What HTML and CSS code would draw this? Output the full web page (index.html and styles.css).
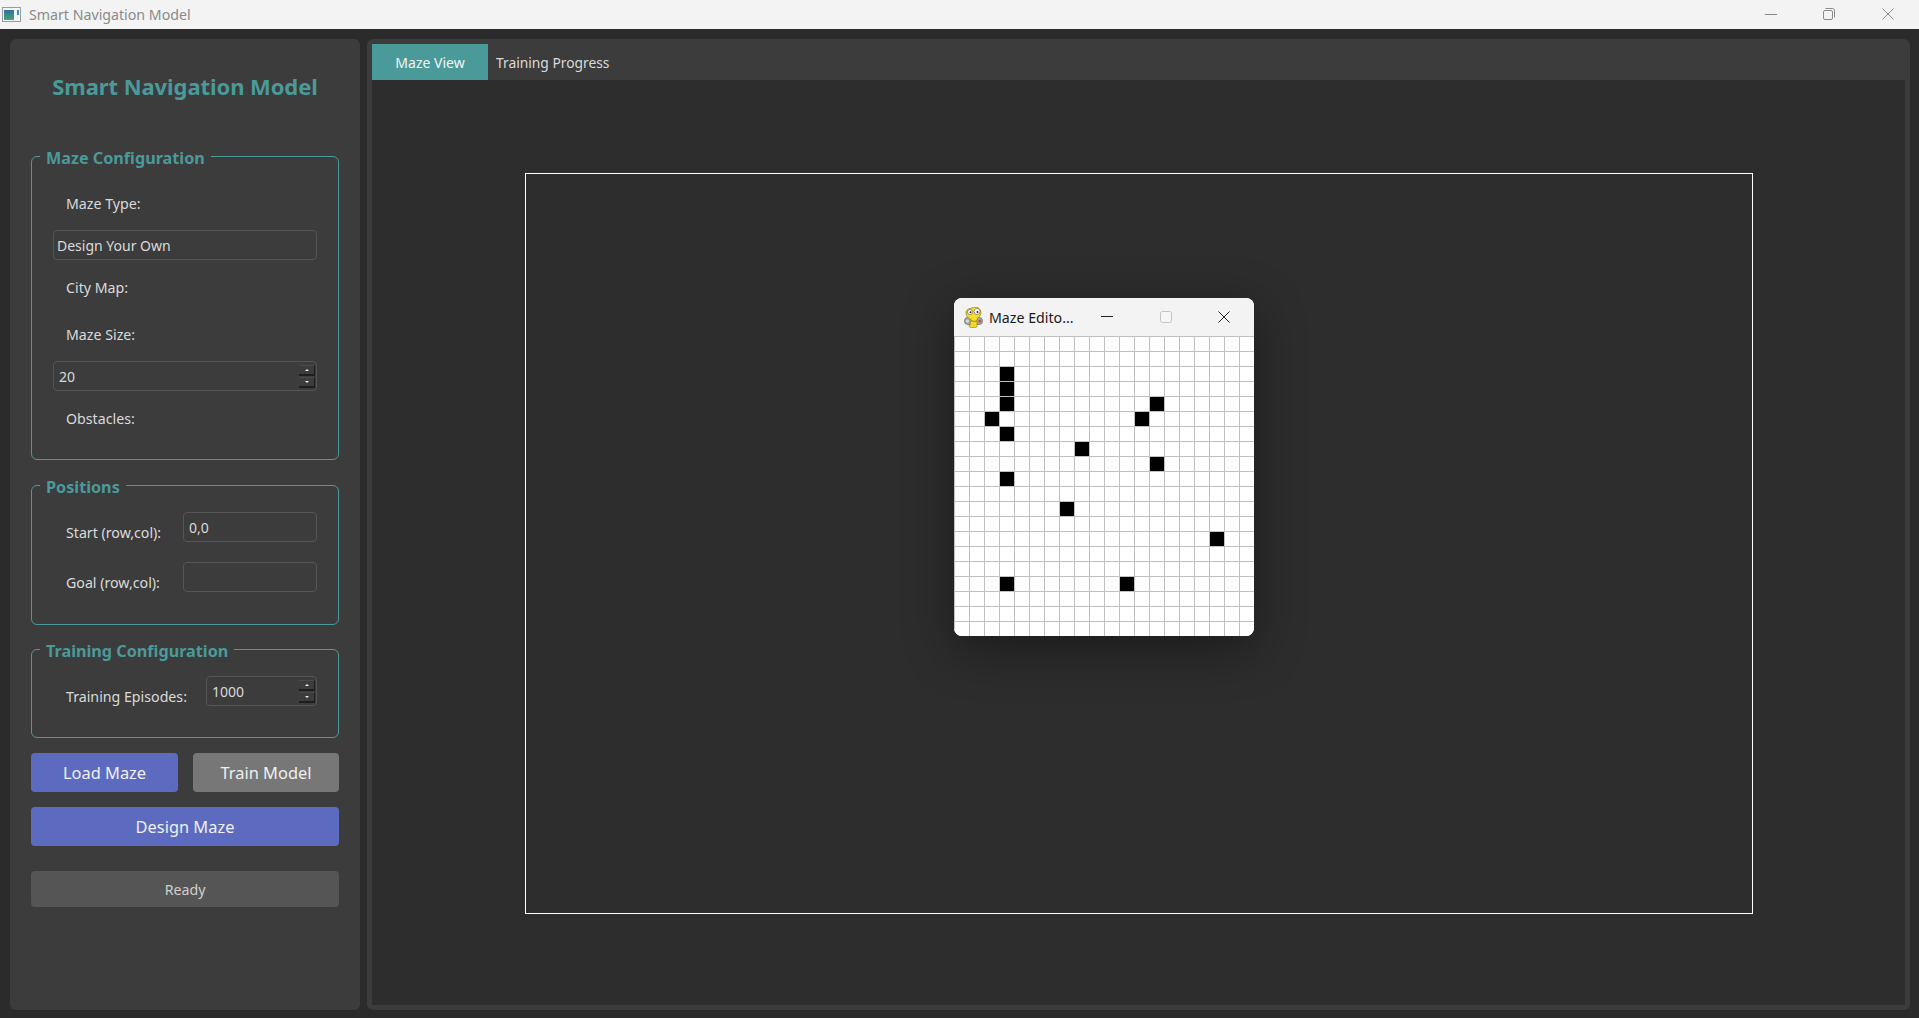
FILE: index.html
```html
<!DOCTYPE html>
<html lang="en">
<head>
<meta charset="utf-8">
<title>Smart Navigation Model</title>
<link rel="stylesheet" href="styles.css">
</head>
<body>
<header class="titlebar">
  <svg class="app-icon" width="19" height="15" viewBox="0 0 19 15">
    <defs><linearGradient id="ag" x1="0" y1="0" x2="0" y2="1"><stop offset="0" stop-color="#2f6f9a"/><stop offset="1" stop-color="#4aa37c"/></linearGradient></defs>
    <rect x=".5" y=".5" width="18" height="14" fill="#f4f4f4" stroke="#9a9a9a"/>
    <rect x="2" y="3" width="10" height="10" fill="url(#ag)"/>
    <rect x="15" y="3" width="2" height="5" fill="#3f8fc4"/>
  </svg>
  <span class="app-title">Smart Navigation Model</span>
  <div class="controls">
    <span class="ctl"><svg width="12" height="12" viewBox="0 0 12 12"><path d="M0 6.5h12" stroke="#8a8a8a" fill="none"/></svg></span>
    <span class="ctl"><svg width="12" height="12" viewBox="0 0 12 12"><rect x=".5" y="2.5" width="9" height="9" rx="1.5" fill="none" stroke="#8a8a8a"/><path d="M2.5 .5h7a2 2 0 0 1 2 2v7" fill="none" stroke="#8a8a8a"/></svg></span>
    <span class="ctl"><svg width="12" height="12" viewBox="0 0 12 12"><path d="M.5 .5l11 11M11.5 .5l-11 11" stroke="#8a8a8a" fill="none"/></svg></span>
  </div>
</header>

<main class="main">
  <aside class="side">
    <h1 class="side-title">Smart Navigation Model</h1>

    <section class="group group-maze">
      <h2 class="group-title">Maze Configuration</h2>
      <div class="lbl lbl-block">Maze Type:</div>
      <div class="field">Design Your Own</div>
      <div class="lbl lbl-block">City Map:</div>
      <div class="lbl lbl-block">Maze Size:</div>
      <div class="field field-spin">20
        <span class="spin"><span class="spin-btn"><i class="tri tri-up"></i></span><span class="spin-btn"><i class="tri tri-down"></i></span></span>
      </div>
      <div class="lbl lbl-block">Obstacles:</div>
    </section>

    <section class="group group-pos">
      <h2 class="group-title">Positions</h2>
      <div class="row">
        <span class="lbl">Start (row,col):</span>
        <div class="field field-pos">0,0</div>
      </div>
      <div class="row">
        <span class="lbl">Goal (row,col):</span>
        <div class="field field-pos"></div>
      </div>
    </section>

    <section class="group group-train">
      <h2 class="group-title">Training Configuration</h2>
      <div class="row">
        <span class="lbl">Training Episodes:</span>
        <div class="field field-eps field-spin">1000
          <span class="spin"><span class="spin-btn"><i class="tri tri-up"></i></span><span class="spin-btn"><i class="tri tri-down"></i></span></span>
        </div>
      </div>
    </section>

    <div class="btn-row">
      <button class="btn btn-blue">Load Maze</button>
      <button class="btn btn-grey">Train Model</button>
    </div>
    <button class="btn btn-blue btn-wide">Design Maze</button>
    <div class="status">Ready</div>
  </aside>

  <section class="view">
    <nav class="tabs">
      <span class="tab tab-active">Maze View</span>
      <span class="tab">Training Progress</span>
    </nav>
    <div class="pane">
      <div class="canvas">
        <div class="editor">
          <div class="editor-bar">
            <svg class="snake" width="19" height="21" viewBox="0 0 19 21">
              <rect x=".5" y="10.5" width="18" height="7" rx="3.2" fill="#a9a9a2" stroke="#6a6a66" stroke-width=".7"/>
              <circle cx="3.5" cy="14" r="1.6" fill="#dcdcd8"/>
              <circle cx="15.8" cy="14" r="1.5" fill="#a85a5a"/>
              <path d="M6 14h7v5.2c0 1-1 1.3-2.5 1.3H7.5C6 20.500 5 20 5 19s1.500-1 1.500-2z" fill="#f3d92a" stroke="#8a7a10" stroke-width=".6"/>
              <path d="M2 6c0-3 3-5 5-4.500 1.500-1.800 6-2 8 0 2.500 2 2.500 6.500 0 8-1 1-1.500 2-2 4-2.500 1.500-5 1-6-1-1.500-.5-5-2.500-5-6.500z" fill="#f6dc2a" stroke="#8a7a10" stroke-width=".7"/>
              <circle cx="6" cy="5" r="2.5" fill="#fff" stroke="#55554a" stroke-width=".6"/>
              <circle cx="13" cy="4.500" r="3" fill="#fff" stroke="#55554a" stroke-width=".6"/>
              <circle cx="6.500" cy="5.200" r=".9" fill="#222"/>
              <circle cx="13.500" cy="5" r="1" fill="#222"/>
            </svg>
            <span class="editor-title">Maze Edito...</span>
            <div class="editor-controls">
              <span class="ectl"><svg width="12" height="12" viewBox="0 0 12 12"><path d="M0 5.500h12" stroke="#222" fill="none"/></svg></span>
              <span class="ectl"><svg width="12" height="12" viewBox="0 0 12 12"><rect x=".5" y=".5" width="11" height="11" rx="2" fill="#f6f6f6" stroke="#c4c4c4"/></svg></span>
              <span class="ectl"><svg width="12" height="12" viewBox="0 0 12 12"><path d="M.5 .5l11 11M11.5 .5l-11 11" stroke="#222" fill="none"/></svg></span>
            </div>
          </div>
          <div class="maze">
            <i class="wall" style="grid-area:3/4"></i>
            <i class="wall" style="grid-area:4/4"></i>
            <i class="wall" style="grid-area:5/4"></i>
            <i class="wall" style="grid-area:6/3"></i>
            <i class="wall" style="grid-area:7/4"></i>
            <i class="wall" style="grid-area:5/14"></i>
            <i class="wall" style="grid-area:6/13"></i>
            <i class="wall" style="grid-area:8/9"></i>
            <i class="wall" style="grid-area:9/14"></i>
            <i class="wall" style="grid-area:10/4"></i>
            <i class="wall" style="grid-area:12/8"></i>
            <i class="wall" style="grid-area:14/18"></i>
            <i class="wall" style="grid-area:17/4"></i>
            <i class="wall" style="grid-area:17/12"></i>
          </div>
        </div>
      </div>
    </div>
  </section>
</main>
</body>
</html>
```
FILE: styles.css
```css
* { box-sizing: border-box; }
html, body { margin: 0; height: 100%; }
body {
  width: 1919px;
  height: 1018px;
  display: flex;
  flex-direction: column;
  overflow: hidden;
  background: #2b2b2b;
  font-family: "Noto Sans", "Open Sans", sans-serif;
  font-size: 14.2px;
  color: #dadada;
}

.titlebar {
  height: 29px;
  flex: none;
  display: flex;
  align-items: center;
  background: #f3f3f3;
  padding-left: 2px;
}
.app-icon { flex: none; margin-top: -1px; }
.app-title { margin-left: 8px; font-size: 14.2px; color: #8a8a8a; margin-top: -1px; }
.controls { margin-left: auto; display: flex; padding-right: 2px; }
.ctl { width: 58.5px; height: 29px; display: flex; align-items: center; justify-content: center; margin-top: -1px; }

.main {
  flex: 1;
  min-height: 0;
  display: flex;
  gap: 7px;
  padding: 10px 9px 8px 10px;
}

.side {
  width: 350px;
  flex: none;
  background: #3c3c3c;
  border-radius: 6px;
  padding: 0 21px;
  display: flex;
  flex-direction: column;
}
.side-title {
  margin: 0 0 23px;
  height: 94px;
  display: flex;
  align-items: center;
  justify-content: center;
  font-size: 22px;
  font-weight: 700;
  letter-spacing: -.08px;
  color: #4a9a9a;
}

.group {
  position: relative;
  border: 1px solid #4a9a9a;
  border-radius: 6px;
  padding: 0 21px;
  flex: none;
}
.group-title {
  position: absolute;
  top: -11px;
  left: 8px;
  margin: 0;
  padding: 0 6px;
  height: 24px;
  line-height: 24px;
  background: #3c3c3c;
  font-size: 16.2px;
  font-weight: 700;
  color: #4a9a9a;
  white-space: nowrap;
}

.group-maze {
  height: 304px;
  padding-top: 32px;
  display: flex;
  flex-direction: column;
}
.group-pos { height: 140px; margin-top: 25px; padding-top: 26px; display: flex; flex-direction: column; gap: 20px; }
.group-train { height: 89px; margin-top: 24px; padding-top: 26px; }

.lbl { padding-left: 13px; white-space: nowrap; }
.lbl-block { height: 30px; line-height: 30px; }
.lbl-block + .field { margin-top: 11px; }
.field + .lbl-block { margin-top: 13px; }
.lbl-block + .lbl-block { margin-top: 17px; }

.field {
  position: relative;
  height: 30px;
  line-height: 29px;
  font-size: 14px;
  background: #3c3c3c;
  border: 1px solid #555;
  border-radius: 4px;
  padding-left: 3px;
}
.field-spin { padding-left: 5px; }
.row { display: flex; align-items: center; justify-content: space-between; height: 30px; }
.row .lbl { margin-top: 11px; }
.group-train .row .lbl { margin-top: 10px; }
.field-pos { width: 134px; padding-left: 5px; }
.field-eps { width: 111px; padding-left: 5px; }

.spin {
  position: absolute;
  right: 1px;
  top: 3px;
  width: 16px;
  display: flex;
  flex-direction: column;
  gap: 1px;
}
.spin-btn {
  height: 11px;
  background: #3c3c3c;
  border-bottom: 2px solid #1e1e1e;
  border-right: 1px solid #1e1e1e;
  border-top: 1px solid #4a4a4a;
  display: flex;
  align-items: center;
  justify-content: center;
}
.tri { width: 0; height: 0; border-left: 2px solid transparent; border-right: 2px solid transparent; }
.tri-up { border-bottom: 2px solid #eee; }
.tri-down { border-top: 2px solid #eee; }

.btn-row { display: flex; justify-content: space-between; margin-top: 15px; }
.btn {
  height: 39px;
  border: 0;
  border-radius: 4px;
  color: #f0f0f0;
  font-family: inherit;
  font-size: 16.4px;
  padding: 0;
}
.btn-row .btn { width: 147px; }
.btn-row .btn-grey { width: 146px; }
.btn-blue { background: #5c6bc0; }
.btn-grey { background: #777777; }
.btn-wide { width: 308px; margin-top: 15px; flex: none; }
.status {
  margin-top: 25px;
  height: 36px;
  line-height: 37px;
  text-align: center;
  background: #555555;
  border-radius: 4px;
  color: #cfcfcf;
}

.view {
  flex: 1;
  min-width: 0;
  background: #3c3c3c;
  border-radius: 6px;
  padding: 5px;
  display: flex;
  flex-direction: column;
}
.tabs { height: 36px; flex: none; display: flex; }
.tab { height: 36px; line-height: 38px; padding: 0 8px; font-size: 13.8px; }
.tab-active { width: 116px; padding: 0; text-align: center; background: #4a9a9a; color: #f4f4f4; font-size: 14px; }
.pane {
  flex: 1;
  min-height: 0;
  background: #2d2d2d;
  padding: 93px 152px 91px 153px;
  display: flex;
}
.canvas { position: relative; flex: 1; border: 1px solid #ffffff; }

.editor {
  position: absolute;
  left: 428px;
  top: 124px;
  width: 300px;
  height: 338px;
  border-radius: 8px;
  overflow: hidden;
  background: #fff;
  box-shadow: 0 12px 50px rgba(0, 0, 0, .42);
}
.editor-bar { height: 38px; background: #f3f3f3; display: flex; align-items: center; padding-left: 10px; }
.snake { flex: none; }
.editor-title { margin-left: 6px; color: #1a1a1a; font-size: 14.2px; white-space: nowrap; }
.editor-controls { margin-left: auto; display: flex; padding-right: 1px; }
.ectl { width: 58px; height: 38px; display: flex; align-items: center; justify-content: center; }
.ectl:first-child { margin-right: 1px; margin-left: -1px; }

.maze {
  width: 300px;
  height: 300px;
  display: grid;
  grid-template-columns: repeat(20, 15px);
  grid-template-rows: repeat(20, 15px);
  background-color: #fff;
  background-image:
    linear-gradient(to right, #c0c0c0 1px, transparent 1px),
    linear-gradient(to bottom, #c0c0c0 1px, transparent 1px);
  background-size: 15px 15px;
}
.wall { display: block; margin: 1px 0 0 1px; background: #000; }
```
